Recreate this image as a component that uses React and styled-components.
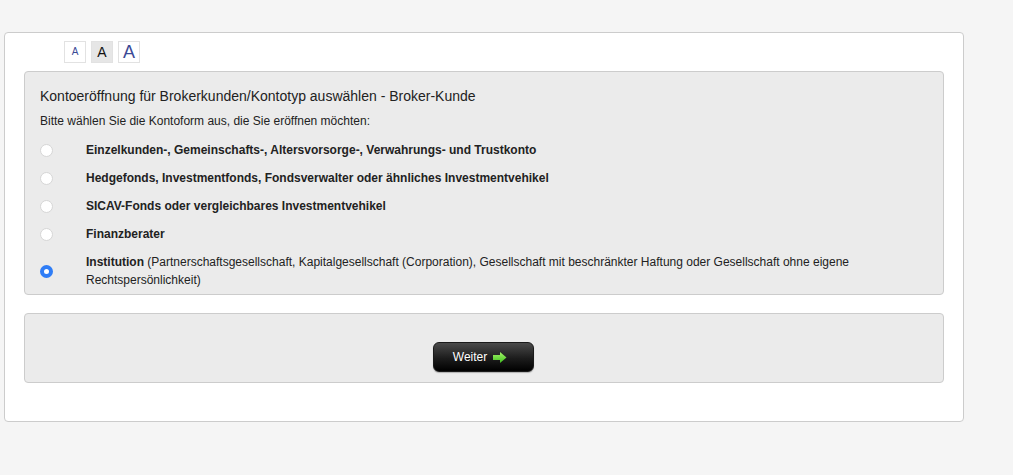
import React, { useState } from 'react';
import styled, { createGlobalStyle, css } from 'styled-components';

const GlobalStyle = createGlobalStyle`
  html, body {
    margin: 0;
    padding: 0;
    background: #f5f5f5;
    font-family: "Liberation Sans", Arial, Helvetica, sans-serif;
    color: #222;
  }
`;

const Page = styled.div`
  padding: 32px 0 40px 4px;
`;

const Card = styled.div`
  width: 960px;
  background: #fff;
  border: 1px solid #cccccc;
  border-radius: 4px;
  padding: 8px 19px 38px;
  box-sizing: border-box;
`;

const SizeBar = styled.div`
  display: flex;
  gap: 5px;
  margin-left: 40px;
  margin-bottom: 8px;
`;

const SizeButton = styled.button`
  width: 22px;
  height: 22px;
  padding: 0;
  border: 1px solid #e2e2e2;
  background: #fff;
  color: #3b4a96;
  font-family: "Liberation Sans", Arial, sans-serif;
  font-size: ${p => p.size}px;
  line-height: 20px;
  display: flex;
  align-items: center;
  justify-content: center;
  cursor: pointer;
  ${p => p.active && css`
    background: #e6e6e6;
    color: #111;
  `}
`;

const Panel = styled.div`
  background: #ebebeb;
  border: 1px solid #cccccc;
  border-radius: 4px;
  ${p => p.footer ? css`
    margin-top: 18px;
    display: flex;
    justify-content: center;
    padding: 28px 2px 0 0;
    height: 40px;
  ` : css`
    padding: 15px 15px 5px;
  `}
`;

const Title = styled.div`
  font-size: 14px;
  line-height: 18px;
  color: #222;
  margin-bottom: 9px;
`;

const Intro = styled.div`
  font-size: 12px;
  line-height: 14px;
  margin-bottom: 8px;
`;

const OptionList = styled.div`
  display: flex;
  flex-direction: column;
`;

const Option = styled.label`
  display: grid;
  grid-template-columns: 46px 1fr;
  align-items: center;
  min-height: 28px;
  font-size: 12px;
  line-height: 18px;
  cursor: pointer;
  ${p => p.multi && css`
    padding-top: 5px;
  `}
`;

const Radio = styled.input.attrs({ type: 'radio' })`
  appearance: none;
  margin: 0;
  width: 13px;
  height: 13px;
  border-radius: 50%;
  background: #fff;
  border: 1px solid #d6d6d6;
  box-sizing: border-box;
  &:checked {
    background: #fff;
    border: 4px solid #2f7df6;
  }
`;

const Strong = styled.b`
  font-weight: bold;
`;

const NextButton = styled.button`
  width: 101px;
  height: 30px;
  border-radius: 6px;
  border: 1px solid #1a1a1a;
  background: linear-gradient(#4a4a4a, #1c1c1c 55%, #000);
  box-shadow: 0 1px 1px rgba(0,0,0,0.25);
  color: #fff;
  font-family: "Liberation Sans", Arial, sans-serif;
  font-size: 12px;
  display: flex;
  align-items: center;
  justify-content: center;
  gap: 6px;
  padding: 0 6px 0 0;
  cursor: pointer;
`;

const Arrow = () => (
  <svg width="14" height="11" viewBox="0 0 14 11">
    <defs>
      <linearGradient id="g" x1="0" y1="0" x2="0" y2="1">
        <stop offset="0" stopColor="#a6f56a" />
        <stop offset="1" stopColor="#3fbf1f" />
      </linearGradient>
    </defs>
    <polygon points="0,3 7,3 7,0 13.5,5.5 7,11 7,8 0,8" fill="url(#g)" />
  </svg>
);

const options = [
  { id: 'ind', label: 'Einzelkunden-, Gemeinschafts-, Altersvorsorge-, Verwahrungs- und Trustkonto' },
  { id: 'hedge', label: 'Hedgefonds, Investmentfonds, Fondsverwalter oder ähnliches Investmentvehikel' },
  { id: 'sicav', label: 'SICAV-Fonds oder vergleichbares Investmentvehikel' },
  { id: 'fa', label: 'Finanzberater' },
  {
    id: 'inst',
    label: 'Institution',
    extra: ' (Partnerschaftsgesellschaft, Kapitalgesellschaft (Corporation), Gesellschaft mit beschränkter Haftung oder Gesellschaft ohne eigene Rechtspersönlichkeit)',
  },
];

export default function App() {
  const [selected, setSelected] = useState('inst');
  const [size, setSize] = useState(1);

  return (
    <Page>
      <GlobalStyle />
      <Card>
        <SizeBar>
          {[10, 14, 18].map((s, i) => (
            <SizeButton key={s} size={s} active={size === i} onClick={() => setSize(i)}>A</SizeButton>
          ))}
        </SizeBar>
        <Panel>
          <Title>Kontoeröffnung für Brokerkunden/Kontotyp auswählen - Broker-Kunde</Title>
          <Intro>Bitte wählen Sie die Kontoform aus, die Sie eröffnen möchten:</Intro>
          <OptionList>
            {options.map(o => (
              <Option key={o.id} multi={!!o.extra}>
                <Radio
                  name="kontoform"
                  checked={selected === o.id}
                  onChange={() => setSelected(o.id)}
                />
                <span>
                  <Strong>{o.label}</Strong>
                  {o.extra}
                </span>
              </Option>
            ))}
          </OptionList>
        </Panel>
        <Panel footer>
          <NextButton>
            Weiter <Arrow />
          </NextButton>
        </Panel>
      </Card>
    </Page>
  );
}
